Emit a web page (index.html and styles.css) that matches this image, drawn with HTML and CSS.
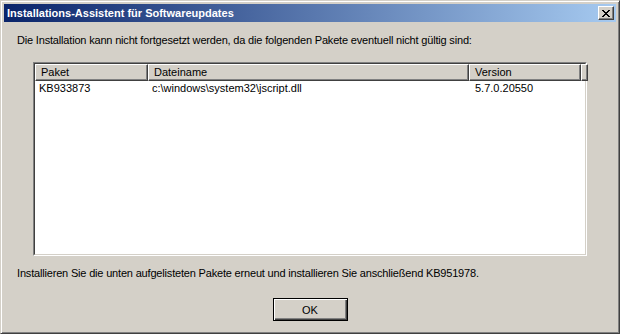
FILE: index.html
```html
<!DOCTYPE html>
<html lang="de">
<head>
    <meta charset="UTF-8">
    <title>Installations-Assistent für Softwareupdates</title>
    <link rel="stylesheet" href="styles.css">
</head>
<body>
    <div class="window">
        <div class="titlebar">
            <span class="title">Installations-Assistent für Softwareupdates</span>
            <button class="close-btn">
                <svg width="8" height="7" viewBox="0 0 8 7" shape-rendering="crispEdges">
                    <path fill="#000" d="M0 0h2v1H0z M6 0h2v1H6z M1 1h2v1H1z M5 1h2v1H5z M2 2h4v1H2z M3 3h2v1H3z M2 4h4v1H2z M1 5h2v1H1z M5 5h2v1H5z M0 6h2v1H0z M6 6h2v1H6z"/>
                </svg>
            </button>
        </div>
        <div class="content">
            <p class="message">Die Installation kann nicht fortgesetzt werden, da die folgenden Pakete eventuell nicht gültig sind:</p>
            <div class="list">
                <div class="list-inner">
                    <div class="list-header">
                        <div class="col-head">Paket</div>
                        <div class="col-head">Dateiname</div>
                        <div class="col-head">Version</div>
                        <div class="col-head"></div>
                    </div>
                    <div class="list-row">
                        <div class="cell">KB933873</div>
                        <div class="cell">c:\windows\system32\jscript.dll</div>
                        <div class="cell version">5.7.0.20550</div>
                        <div class="cell"></div>
                    </div>
                </div>
            </div>
            <p class="message bottom">Installieren Sie die unten aufgelisteten Pakete erneut und installieren Sie anschließend KB951978.</p>
            <div class="actions">
                <button class="ok-btn">OK</button>
            </div>
        </div>
    </div>
</body>
</html>
```

FILE: styles.css
```css
/* Grundlayout */
* {
    box-sizing: border-box;
}

body {
    margin: 0;
    background-color: #d4d0c8;
    font-family: 'Liberation Sans', Arial, sans-serif;
    font-size: 11px;
    color: #000;
}

/* Fensterrahmen */
.window {
    width: 620px;
    height: 334px;
    border: 1px solid;
    border-color: #d4d0c8 #404040 #404040 #d4d0c8;
    box-shadow: inset 1px 1px #fff, inset -1px -1px #808080;
    padding: 3px;
}

/* Titelleiste */
.titlebar {
    height: 18px;
    display: flex;
    justify-content: space-between;
    align-items: center;
    padding: 0 2px 0 2px;
    background: linear-gradient(to right, #0a246a, #a6caf0);
    color: #fff;
}

.title {
    font-weight: bold;
    padding-left: 1px;
}

.close-btn {
    width: 16px;
    height: 14px;
    padding: 0;
    display: flex;
    justify-content: center;
    align-items: center;
    background-color: #d4d0c8;
    border: 1px solid;
    border-color: #fff #404040 #404040 #fff;
    box-shadow: inset -1px -1px #808080;
}

/* Inhalt */
.message {
    margin: 12px 0 0 13px;
    line-height: 13px;
    letter-spacing: -0.18px;
}

.message.bottom {
    margin-top: 11px;
}

/* Listenansicht */
.list {
    margin: 15px 0 0 29px;
    width: 554px;
    height: 194px;
    border: 1px solid;
    border-color: #808080 #fff #fff #808080;
}

.list-inner {
    height: 100%;
    background-color: #fff;
    border: 1px solid;
    border-color: #404040 #d4d0c8 #d4d0c8 #404040;
}

.list-header,
.list-row {
    display: grid;
    grid-template-columns: 113px 321px 112px 1fr;
}

.col-head {
    height: 17px;
    line-height: 15px;
    padding-left: 5px;
    background-color: #d4d0c8;
    border: 1px solid;
    border-color: #fff #404040 #404040 #fff;
    box-shadow: inset -1px -1px #808080;
    white-space: nowrap;
}

.cell {
    height: 14px;
    line-height: 14px;
    padding-left: 4px;
    white-space: nowrap;
}

.cell.version {
    padding-left: 6px;
}

/* Schaltflächen */
.actions {
    margin-top: 18px;
    text-align: center;
}

.ok-btn {
    width: 75px;
    height: 23px;
    padding: 0;
    font-family: inherit;
    font-size: 11px;
    color: #000;
    background-color: #d4d0c8;
    border: 1px solid #000;
    box-shadow: inset 1px 1px #fff, inset -1px -1px #404040, inset -2px -2px #808080;
}
```
